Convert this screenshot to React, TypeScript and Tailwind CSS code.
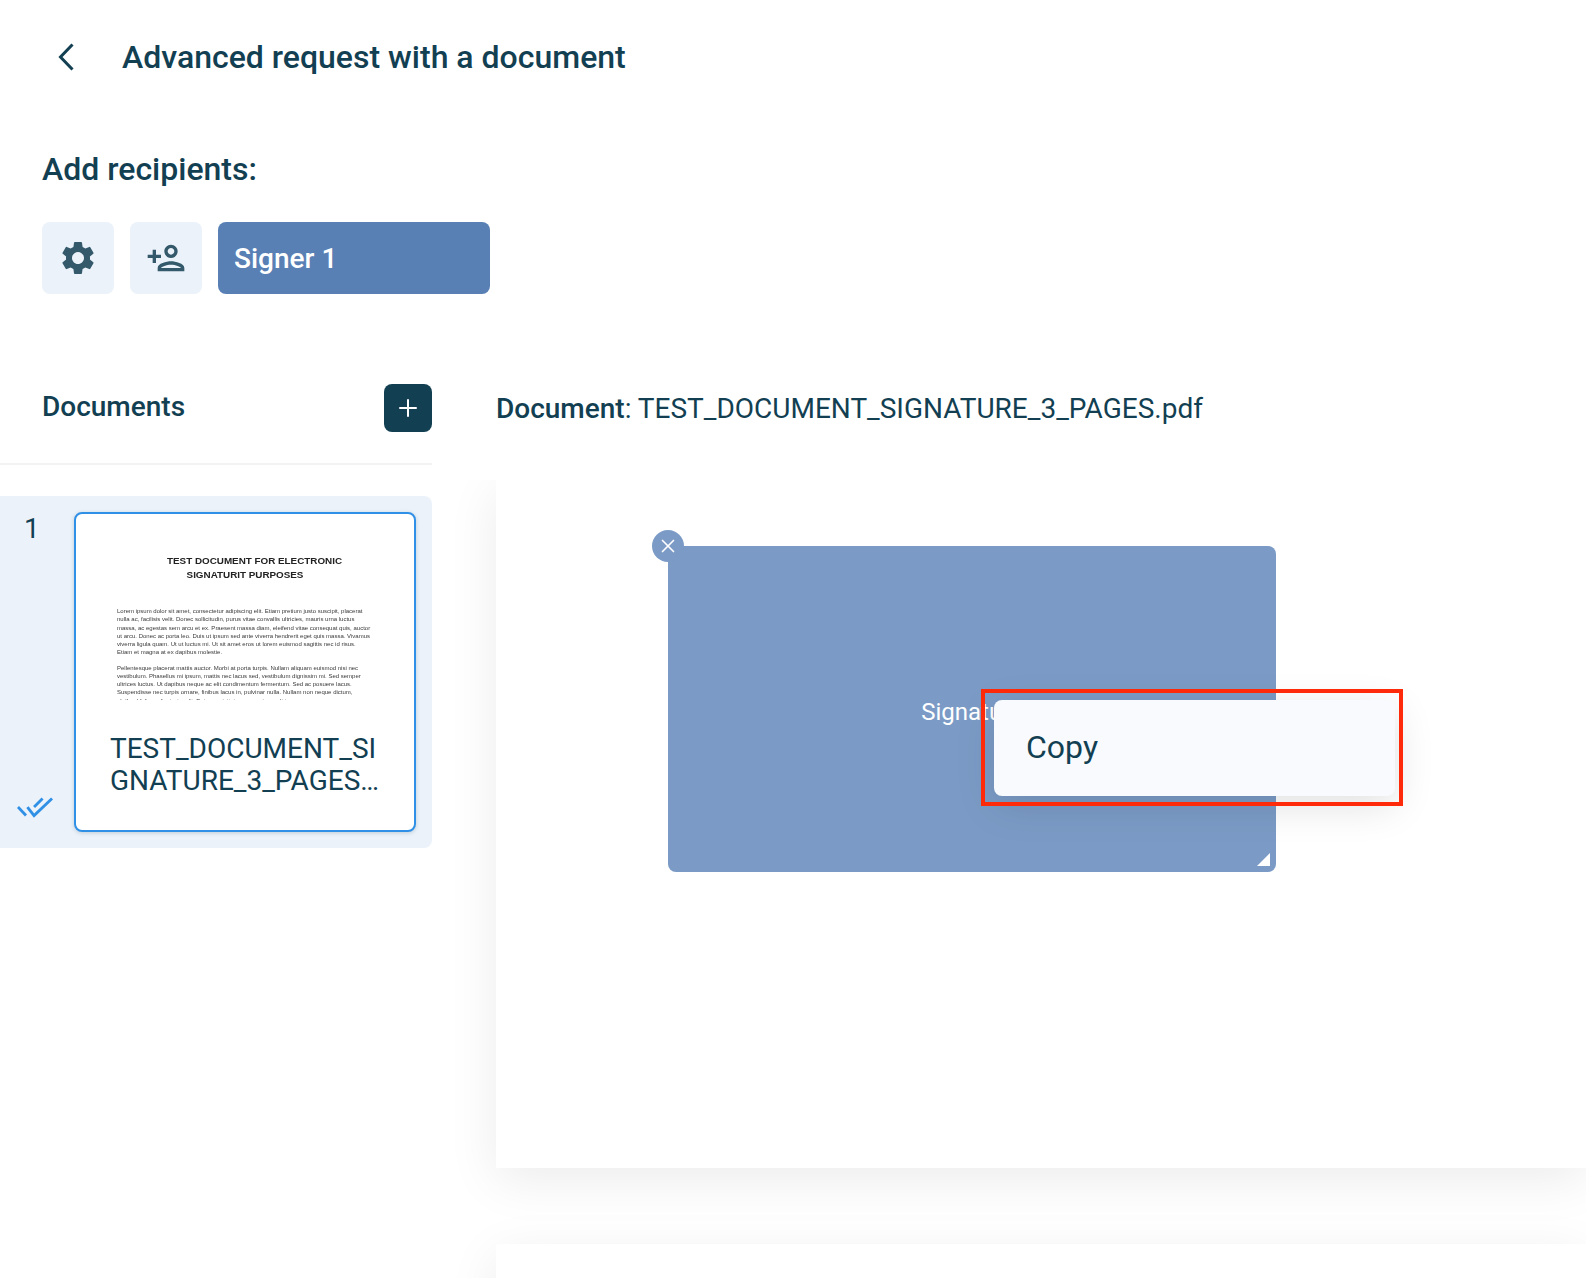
import React from 'react';
import { Plus, X } from 'lucide-react';
import { MdSettings, MdOutlinePersonAdd } from 'react-icons/md';

const paragraphOne = [
  'Lorem ipsum dolor sit amet, consectetur adipiscing elit. Etiam pretium justo suscipit, placerat',
  'nulla ac, facilisis velit. Donec sollicitudin, purus vitae convallis ultricies, mauris urna luctus',
  'massa, ac egestas sem arcu et ex. Praesent massa diam, eleifend vitae consequat quis, auctor',
  'ut arcu. Donec ac porta leo. Duis ut ipsum sed ante viverra hendrerit eget quis massa. Vivamus',
  'viverra ligula quam. Ut ut luctus mi. Ut sit amet eros ut lorem euismod sagittis nec id risus.',
  'Etiam et magna at ex dapibus molestie.',
];

const paragraphTwo = [
  'Pellentesque placerat mattis auctor. Morbi at porta turpis. Nullam aliquam euismod nisi nec',
  'vestibulum. Phasellus mi ipsum, mattis nec lacus sed, vestibulum dignissim mi. Sed semper',
  'ultrices luctus. Ut dapibus neque ac elit condimentum fermentum. Sed ac posuere lacus.',
  'Suspendisse nec turpis ornare, finibus lacus in, pulvinar nulla. Nullam non neque dictum,',
  'eleifend felis a, dignissim elit. Duis suscipit, ipsum maximus ultrices semper, augue massa',
];

function Thumbnail() {
  return (
    <div className="h-[186px] overflow-hidden font-['Liberation_Sans',sans-serif] text-[#3a3a3a] blur-[0.4px]">
      <div className="pt-[40px] text-center text-[9.85px] font-bold leading-[13.5px] text-[#222]">
        <div className="pl-[19px]">TEST DOCUMENT FOR ELECTRONIC</div>
        <div>SIGNATURIT PURPOSES</div>
      </div>
      <div className="mt-[26px] whitespace-nowrap pl-[41px] text-[6px] leading-[8.25px]">
        {paragraphOne.map((line) => (
          <div key={line}>{line}</div>
        ))}
        <div className="mt-[7px]">
          {paragraphTwo.map((line) => (
            <div key={line}>{line}</div>
          ))}
        </div>
      </div>
    </div>
  );
}

export default function App() {
  return (
    <div className="flex h-[1278px] flex-col overflow-hidden bg-white font-['Roboto',sans-serif] text-[#124052]">
      {/* Title */}
      <div className="flex h-[114px] shrink-0 items-center pl-[58px]">
        <svg width="16" height="28" viewBox="0 0 16 28" fill="none" stroke="#124052" strokeWidth="3">
          <polyline points="14.5,1.5 2.5,14 14.5,26.5" />
        </svg>
        <h1 className="ml-[48px] text-[32px] font-medium leading-none">Advanced request with a document</h1>
      </div>

      {/* Recipients */}
      <div className="px-[42px] pt-[34px]">
        <h2 className="text-[32px] font-medium leading-[42px]">Add recipients:</h2>
        <div className="mt-[32px] flex gap-[16px]">
          <button className="flex h-[72px] w-[72px] items-center justify-center rounded-lg bg-[#ebf2fa] text-[#33596a]">
            <MdSettings size={40} />
          </button>
          <button className="flex h-[72px] w-[72px] items-center justify-center rounded-lg bg-[#ebf2fa] text-[#33596a]">
            <MdOutlinePersonAdd size={40} />
          </button>
          <div className="flex h-[72px] w-[272px] items-center rounded-lg bg-[#5980b5] pl-[16px] pt-[2px] text-[28px] font-medium text-white">
            Signer 1
          </div>
        </div>
      </div>

      <div className="mt-[58px] flex min-h-0 flex-1">
        {/* Documents sidebar */}
        <div className="relative z-10 w-[432px] shrink-0">
          <div className="flex h-[113px] items-center justify-between border-b-2 border-[#f3f3f3] pl-[42px]">
            <span className="mb-[2px] text-[28px] font-medium">Documents</span>
            <button className="flex h-[48px] w-[48px] items-center justify-center rounded-lg bg-[#124052] text-white">
              <Plus size={30} strokeWidth={1.6} strokeLinecap="butt" />
            </button>
          </div>
          <div className="mt-[31px] flex h-[352px] rounded-r-lg bg-[#ebf2fa] py-[16px] pr-[16px]">
            <div className="flex w-[74px] shrink-0 flex-col items-start justify-between pb-[13px] pl-[24px] pt-[1px]">
              <span className="text-[28px] leading-[32px]">1</span>
              <svg className="-ml-[7px]" width="36" height="22" viewBox="0 0 38 22" fill="none" stroke="#3090e6" strokeWidth="3">
                <polyline points="1,10 9.5,19" />
                <polyline points="11,10 18,19 37,1" />
                <polyline points="18,10 27,1" />
              </svg>
            </div>
            <div className="flex-1 overflow-hidden rounded-lg border-2 border-[#3090e6] bg-white shadow-[0_1px_4px_rgba(20,62,78,0.2)]">
              <Thumbnail />
              <div className="whitespace-nowrap pl-[34px] pt-[33px] text-[28px] leading-[32px]">
                <div>TEST_DOCUMENT_SI</div>
                <div>GNATURE_3_PAGES…</div>
              </div>
            </div>
          </div>
        </div>

        {/* Document viewer */}
        <div className="flex min-w-0 flex-1 flex-col">
          <div className="flex h-[128px] shrink-0 items-center pb-[14px] pl-[64px] text-[28px]">
            <span className="font-medium">Document</span>
            <span className="whitespace-pre">: TEST_DOCUMENT_SIGNATURE_3_PAGES.pdf</span>
          </div>
          <div className="min-h-0 flex-1 overflow-hidden pl-[64px]">
            <div className="relative h-[688px] bg-white shadow-[0_12px_48px_rgba(0,0,0,0.08)]">
              {/* Signature field */}
              <div className="absolute left-[172px] top-[66px] flex h-[326px] w-[608px] items-center justify-center rounded-lg bg-[#7b9bc6] pt-[6px] text-[24px] text-white">
                Signature
                <span className="absolute -left-[16px] -top-[16px] flex h-[32px] w-[32px] items-center justify-center rounded-full bg-[#7b9bc6]">
                  <X size={22} strokeWidth={1.8} />
                </span>
                <span className="absolute bottom-[6px] right-[6px] h-0 w-0 border-b-[13px] border-l-[13px] border-b-white border-l-transparent" />
              </div>
              {/* Context menu */}
              <div className="absolute left-[498px] top-[220px] flex h-[96px] w-[401px] items-center rounded-lg bg-[#f8fafd] pb-[2px] pl-[32px] text-[32px] text-[#124052] shadow-[0_10px_40px_rgba(0,0,0,0.12)]">
                Copy
              </div>
              {/* Annotation */}
              <div className="absolute left-[485px] top-[209px] h-[117px] w-[422px] border-[4px] border-[#ff2a0a]" />
            </div>
            <div className="mt-[76px] h-[688px] bg-white shadow-[0_12px_48px_rgba(0,0,0,0.08)]" />
          </div>
        </div>
      </div>
    </div>
  );
}
